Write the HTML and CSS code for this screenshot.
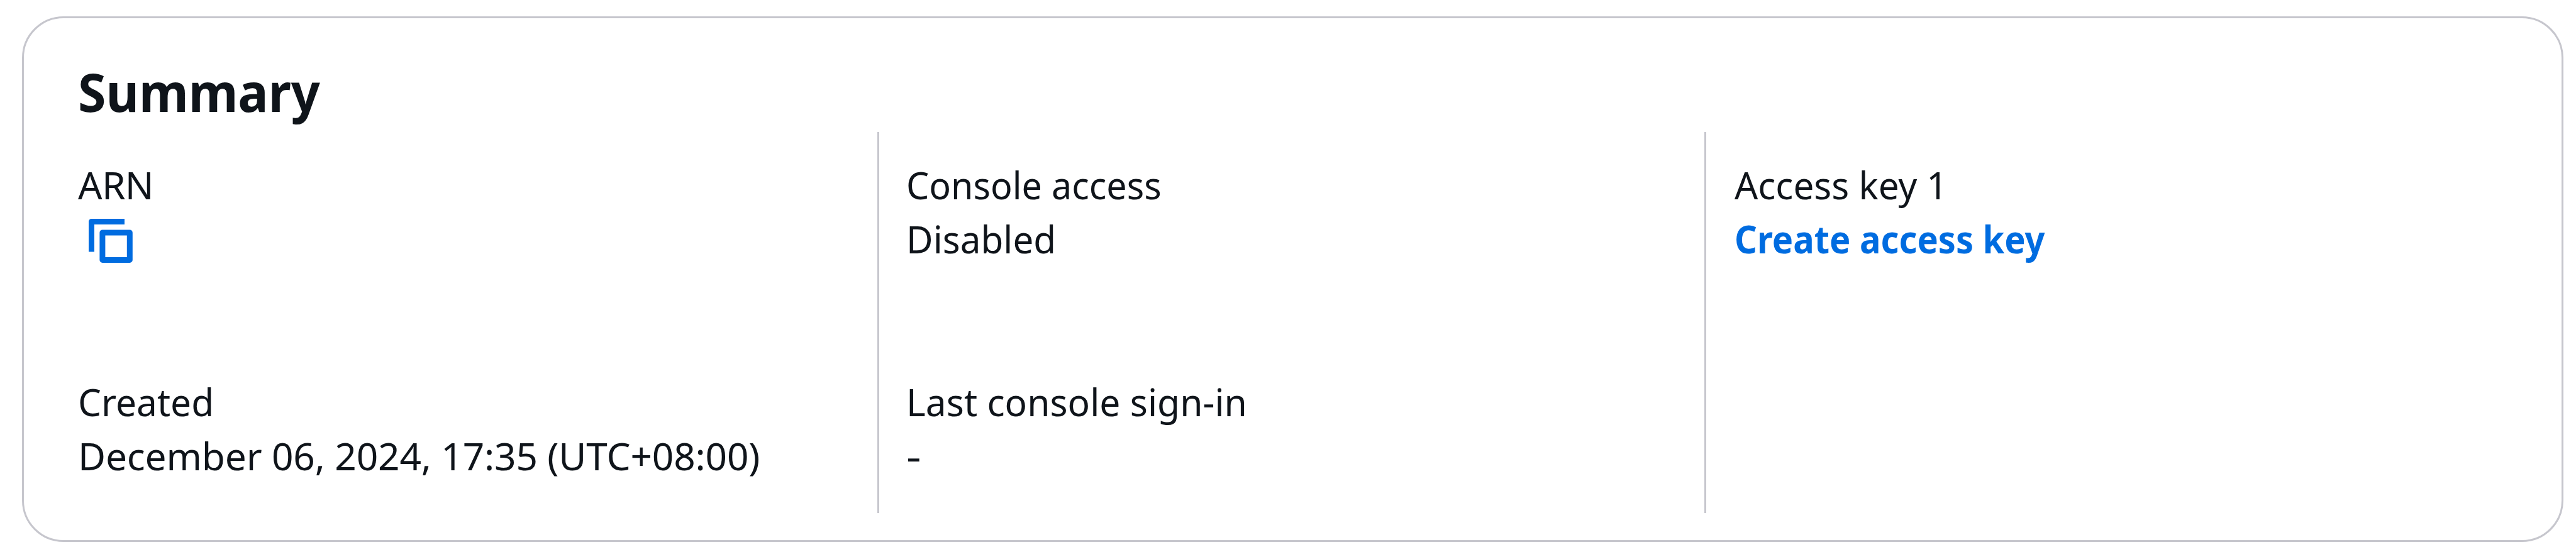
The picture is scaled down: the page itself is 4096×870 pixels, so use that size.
FILE: index.html
```html
<!DOCTYPE html>
<html lang="en">
<head>
<meta charset="utf-8">
<title>Summary</title>
<link rel="stylesheet" href="styles.css">
</head>
<body>
<section class="card">
  <h2 class="title">Summary</h2>
  <div class="columns">
    <div class="column">
      <div class="pair">
        <div class="line arn">ARN</div>
        <div class="line copy">
          <svg class="copy-icon" viewBox="0 0 70 70" width="70" height="70" fill="none" stroke="#006ce0" stroke-width="9" stroke-linejoin="round" role="img" aria-label="Copy"><path d="M57 4.5H4.5V52.6"/><path d="M21.9 21.9H65.3V65.4H21.9Z"/></svg>
        </div>
      </div>
      <div class="pair">
        <div class="line created">Created</div>
        <div class="line date">December 06, 2024, 17:35 (UTC+08:00)</div>
      </div>
    </div>
    <div class="column divided">
      <div class="pair">
        <div class="line console">Console access</div>
        <div class="line disabled">Disabled</div>
      </div>
      <div class="pair">
        <div class="line sign-in">Last console sign-in</div>
        <div class="line empty">-</div>
      </div>
    </div>
    <div class="column divided last">
      <div class="pair">
        <div class="line key">Access key 1</div>
        <a class="line create">Create access key</a>
      </div>
    </div>
  </div>
</section>
</body>
</html>
```
FILE: styles.css
```css
body {
  box-sizing: border-box;
  margin: 0;
  height: 870px;
  padding: 26px 20px 8px 35px;
  overflow: hidden;
  background: #fff;
  color: #0f141a;
  font: 60.4px/86.4px "Noto Sans", "Open Sans", sans-serif;
}

.card {
  box-sizing: border-box;
  height: 836px;
  padding: 60px 84px 0 86px;
  border: 3px solid #c6c6cd;
  border-radius: 66px;
}

.title {
  width: max-content;
  margin: 0 0 7px;
  font-size: 84px;
  line-height: 114px;
  font-weight: 700;
  transform: scaleX(0.961);
  transform-origin: left;
}

.columns {
  display: grid;
  grid-template-columns: 1271px 1314.5px 1fr;
  height: 605.5px;
}

.column {
  display: flex;
  flex-direction: column;
  gap: 172.6px;
  padding-top: 40.5px;
}

.divided {
  border-left: 3px solid #c6c6cd;
  padding-left: 43px;
}

.last { padding-left: 45px; }

.line {
  display: block;
  width: max-content;
  height: 86.4px;
  white-space: nowrap;
  transform-origin: left;
}

.copy {
  display: flex;
  padding: 11.5px 0 0 17px;
  box-sizing: border-box;
}

.copy-icon { flex: none; }

.arn { letter-spacing: -0.7px; }
.created { transform: scaleX(0.97); }
.date { letter-spacing: -0.17px; }
.console { transform: scaleX(0.951); }
.disabled { transform: scaleX(0.967); }
.sign-in { transform: scaleX(0.973); }
.empty { transform: scaleX(1.22); }
.key { transform: scaleX(0.967); }

.create {
  color: #006ce0;
  font-weight: 700;
  transform: scaleX(0.927);
}
```
